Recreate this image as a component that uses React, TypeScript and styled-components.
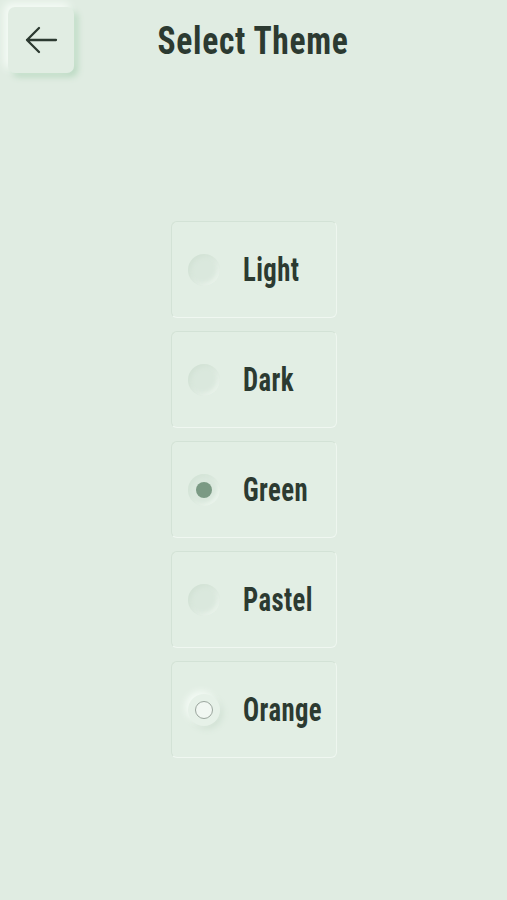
import React, { FC, useState } from 'react';
import styled, { createGlobalStyle } from 'styled-components';

type ThemeKey = 'light' | 'dark' | 'green' | 'pastel' | 'orange';

const THEMES: { key: ThemeKey; label: string }[] = [
	{ key: 'light', label: 'Light' },
	{ key: 'dark', label: 'Dark' },
	{ key: 'green', label: 'Green' },
	{ key: 'pastel', label: 'Pastel' },
	{ key: 'orange', label: 'Orange' },
];

// Roboto Condensed squeezed a little further to get the narrow display face look
const FONT = `"Roboto Condensed", Roboto, sans-serif`;

const GlobalStyle = createGlobalStyle`
	html, body {
		margin: 0;
		padding: 0;
		background: #e0ece2;
	}
	body {
		font-family: ${FONT};
	}
`;

const ArrowLeft: FC = () => (
	<svg width="34" height="34" viewBox="0 0 34 34" fill="none">
		<path d="M32 17H3M15 5L3 17l12 12" stroke="#2c3a31" strokeWidth="2.3" strokeLinecap="round" strokeLinejoin="round" />
	</svg>
);

type RadioProps = { state: 'idle' | 'checked' | 'focus' };

const Radio: FC<RadioProps> = ({ state }) => (
	<RadioWell $state={state}>{state === 'checked' ? <Dot /> : state === 'focus' ? <Ring /> : null}</RadioWell>
);

export default function App() {
	const [selected, setSelected] = useState<ThemeKey>('green');

	return (
		<Page>
			<GlobalStyle />
			<Header>
				<BackButton aria-label="Back">
					<ArrowLeft />
				</BackButton>
				<Title>Select Theme</Title>
			</Header>
			<List>
				{THEMES.map((t) => (
					<Option key={t.key} onClick={() => setSelected(t.key)}>
						<Radio state={t.key === selected ? 'checked' : t.key === 'orange' ? 'focus' : 'idle'} />
						<Label>{t.label}</Label>
					</Option>
				))}
			</List>
		</Page>
	);
}

const Page = styled.div`
	width: 507px;
	min-height: 900px;
	background: #e0ece2;
	box-sizing: border-box;
`;

const Header = styled.header`
	position: relative;
	height: 81px;
	display: flex;
	align-items: center;
	justify-content: center;
`;

const BackButton = styled.button`
	position: absolute;
	left: 8px;
	top: 7px;
	width: 66px;
	height: 66px;
	border: none;
	border-radius: 7px;
	background: #e1ede3;
	display: flex;
	align-items: center;
	justify-content: center;
	padding: 0;
	box-shadow: -4px -4px 8px #f6fcf7, 4px 4px 6px #bcdac3;
	cursor: pointer;
`;

const Title = styled.h1`
	margin: 0;
	display: inline-block;
	font-family: ${FONT};
	font-size: 39px;
	font-weight: 700;
	color: #2c3a31;
	letter-spacing: 0.8px;
	transform: scaleX(0.86);
	transform-origin: center;
`;

const List = styled.div`
	display: flex;
	flex-direction: column;
	align-items: center;
	gap: 13px;
	padding-top: 140px;
`;

const Option = styled.div`
	width: 166px;
	height: 97px;
	box-sizing: border-box;
	border-radius: 6px;
	background: #e2eee4;
	border: 1px solid;
	border-color: #d3e2d6 #eef6ef #f0f7f1 #d3e2d6;
	display: flex;
	align-items: center;
	padding-left: 16px;
	gap: 23px;
	cursor: pointer;
`;

const RadioWell = styled.div<{ $state: RadioProps['state'] }>`
	width: 32px;
	height: 32px;
	border-radius: 50%;
	display: flex;
	align-items: center;
	justify-content: center;
	flex-shrink: 0;
	background: ${(p) => (p.$state === 'focus' ? '#e6f1e8' : '#dae8dd')};
	box-shadow: ${(p) =>
		p.$state === 'focus'
			? '-3px -3px 6px #f3faf4, 3px 3px 6px #d2e2d5'
			: p.$state === 'checked'
			? 'inset 2px 2px 4px #d3e3d6, inset -2px -2px 4px #edf6ee'
			: 'inset 2px 2px 5px #d1e1d4, inset -2px -2px 5px #ecf5ed'};
`;

const Dot = styled.span`
	width: 16px;
	height: 16px;
	border-radius: 50%;
	background: #7b9a84;
`;

const Ring = styled.span`
	width: 18px;
	height: 18px;
	box-sizing: border-box;
	border-radius: 50%;
	border: 1.4px solid #9aa59d;
	background: #f1f7f2;
`;

const Label = styled.span`
	display: inline-block;
	font-family: ${FONT};
	font-size: 33px;
	font-weight: 700;
	color: #2c3a31;
	letter-spacing: 0.5px;
	transform: scaleX(0.81);
	transform-origin: left center;
`;
